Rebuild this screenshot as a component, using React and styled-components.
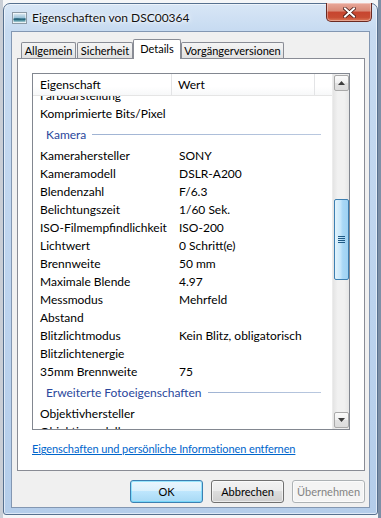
import React from 'react';
import styled, { createGlobalStyle } from 'styled-components';

const GlobalStyle = createGlobalStyle`
  html, body { margin: 0; padding: 0; }
  body {
    width: 381px; height: 518px; overflow: hidden;
    background: #eceef1;
    font-family: "Segoe UI", Lato, "Noto Sans", sans-serif;
    font-size: 12px; color: #000;
  }
  * { box-sizing: border-box; }
`;

const Desktop = styled.div`
  width: 381px; height: 518px; padding: 3px;
  display: flex;
  background: linear-gradient(to right, #c9ced6 0, #c9ced6 3px, #f5f6f8 3px, #f5f6f8 378px, #7d8fa6 378px);
`;

const Window = styled.div`
  flex: 1; display: flex; flex-direction: column;
  border: 1px solid #56708f;
  border-radius: 7px 7px 3px 3px;
  background: linear-gradient(to bottom, #d8e6f6 0, #c7dbf1 26px, #bcd3ee 60%, #b4cdea 100%);
  box-shadow: inset 0 0 0 1px rgba(255,255,255,0.55);
`;

const TitleBar = styled.div`
  height: 27px; display: flex; align-items: center;
  padding: 0 5px 0 8px;
`;

const TitleText = styled.div`
  margin-left: 5px;
  font-size: 12px;
  color: #111;
  text-shadow: 0 0 6px #fff, 0 0 3px #fff;
`;

const CloseButton = styled.div`
  align-self: flex-start; margin-left: auto; margin-top: -1px;
  width: 46px; height: 19px;
  border: 1px solid #6b2a22; border-top: none;
  border-radius: 0 0 5px 5px;
  background: linear-gradient(to bottom, #e9a99b 0, #d98a77 45%, #c7452f 50%, #c84d33 80%, #dd7a5a 100%);
  box-shadow: inset 0 0 0 1px rgba(255,255,255,0.35);
  display: flex; align-items: center; justify-content: center;
`;

const Client = styled.div`
  flex: 1; margin: 0 7px 6px 7px;
  border: 1px solid #8397b2;
  background: #f0f0f0;
  display: flex; flex-direction: column;
  padding: 7px 4px 0 5px;
`;

const TabStrip = styled.div`
  height: 19px; display: flex; align-items: flex-end;
  padding-left: 4px; position: relative; z-index: 1;
`;

const Tab = styled.div`
  width: ${p => p.$w}px;
  height: ${p => (p.$active ? 20 : 16)}px;
  margin-bottom: ${p => (p.$active ? -1 : 0)}px;
  margin-right: ${p => p.$gap || 0}px;
  border: 1px solid #898c95;
  border-bottom: none;
  border-radius: 2px 2px 0 0;
  background: ${p => (p.$active ? '#fff' : 'linear-gradient(to bottom, #f4f4f4 0, #ececec 50%, #e0e0e0 100%)')};
  display: flex; align-items: center; justify-content: center;
  padding-bottom: ${p => (p.$active ? 2 : 0)}px;
  font-size: 11px;
  white-space: nowrap;
`;

const Panel = styled.div`
  height: 413px;
  border: 1px solid #898c95;
  background: #fff;
  display: flex; flex-direction: column;
  padding: 14px 14px 0 14px;
`;

const ListView = styled.div`
  height: 357px;
  border: 1px solid #828790;
  display: flex;
`;

const ListContent = styled.div`
  flex: 1; display: flex; flex-direction: column; overflow: hidden;
`;

const Header = styled.div`
  height: 22px; display: flex; flex: none;
  background: linear-gradient(to bottom, #fff 0, #fff 60%, #f7f8f9 100%);
  border-bottom: 1px solid #e5e5e5;
`;

const HeaderCell = styled.div`
  width: ${p => (p.$w ? `${p.$w}px` : 'auto')};
  flex: ${p => (p.$w ? 'none' : '1')};
  padding-left: ${p => p.$pad || 0}px;
  border-right: ${p => (p.$last ? 'none' : '1px solid #e3e4e6')};
  display: flex; align-items: center;
`;

const Body = styled.div`
  flex: 1; overflow: hidden;
`;

const Rows = styled.div`
  margin-top: ${p => p.$offset}px;
`;

const Row = styled.div`
  height: 18px; display: flex; align-items: center;
  white-space: nowrap;
`;

const NameCell = styled.div`
  width: 146px; padding-left: 7px; flex: none;
`;

const ValueCell = styled.div`
  flex: 1;
`;

const Group = styled.div`
  height: 24px; display: flex; align-items: center;
  padding: 0 11px 0 13px; gap: 6px;
  color: #2a479c;
  white-space: nowrap;
`;

const GroupLine = styled.div`
  flex: 1; height: 1px;
  background: linear-gradient(to right, #9fb3d3, #b9c8df);
`;

const ScrollBar = styled.div`
  width: 17px; flex: none;
  display: flex; flex-direction: column; align-items: center;
  background: linear-gradient(to right, #e4e4e4 0, #f1f1f1 30%, #f1f1f1 70%, #e6e6e6 100%);
  border-left: 1px solid #ececec;
  padding: 1px 0;
`;

const ScrollButton = styled.div`
  width: 15px; height: 16px;
  border: 1px solid #a9a9a9;
  border-radius: 2px;
  background: linear-gradient(to bottom, #fbfbfb 0, #f0f0f0 50%, #e2e2e2 50%, #dcdcdc 100%);
  display: flex; align-items: center; justify-content: center;
  flex: none;
`;

const Thumb = styled.div`
  margin-top: 108px;
  width: 15px; height: 81px; flex: none;
  border: 1px solid #3c7fb1;
  border-radius: 2px;
  background: linear-gradient(to right, #e3f3fc 0, #c8e8fb 40%, #a9d8f6 60%, #9fd2f2 100%);
  display: flex; align-items: center; justify-content: center;
`;

const Spacer = styled.div`
  flex: 1;
`;

const Link = styled.a`
  margin-top: 11px;
  color: #0066cc;
  text-decoration: underline;
  font-size: 11px;
  letter-spacing: -0.1px;
  line-height: 15px;
  align-self: flex-start;
  cursor: pointer;
`;

const ButtonRow = styled.div`
  margin-top: 9px;
  display: flex; justify-content: flex-end; gap: 8px;
`;

const Button = styled.div`
  width: 73px; height: 23px;
  border-radius: 3px;
  display: flex; align-items: center; justify-content: center;
  font-size: 11px;
  border: 1px solid ${p => (p.$default ? '#3c7fb1' : p.$disabled ? '#adb2b5' : '#707070')};
  color: ${p => (p.$disabled ? '#838383' : '#000')};
  background: ${p =>
    p.$default
      ? 'linear-gradient(to bottom, #eaf6fd 0, #d9f0fc 50%, #bee6fd 50%, #a7d9f5 100%)'
      : p.$disabled
      ? '#f4f4f4'
      : 'linear-gradient(to bottom, #f2f2f2 0, #ebebeb 50%, #dddddd 50%, #cfcfcf 100%)'};
  box-shadow: ${p => (p.$default ? 'inset 0 0 0 1px #48d3fb80' : 'inset 0 0 0 1px rgba(255,255,255,0.6)')};
`;

const FileIcon = () => (
  <svg width="15" height="12" viewBox="0 0 15 12">
    <defs>
      <linearGradient id="sky" x1="0" y1="0" x2="0" y2="1">
        <stop offset="0" stopColor="#dbe9f2" />
        <stop offset="0.45" stopColor="#9cc3d9" />
        <stop offset="0.6" stopColor="#2f7088" />
        <stop offset="0.8" stopColor="#5c9aa8" />
        <stop offset="1" stopColor="#cfe3ea" />
      </linearGradient>
    </defs>
    <rect x="0.5" y="0.5" width="14" height="11" fill="#fff" stroke="#8c9aa6" />
    <rect x="1.5" y="1.5" width="12" height="9" fill="url(#sky)" />
    <path d="M1.5 7 Q5 5.5 8 6.8 T13.5 6.2 L13.5 8 L1.5 8 Z" fill="#1f5c72" opacity="0.7" />
  </svg>
);

const CloseGlyph = () => (
  <svg width="13" height="11" viewBox="0 0 13 11">
    <path d="M2 1.5 L11 9.5 M11 1.5 L2 9.5" stroke="#4a1a14" strokeWidth="3.6" strokeLinecap="square" />
    <path d="M2 1.5 L11 9.5 M11 1.5 L2 9.5" stroke="#fff" strokeWidth="2" strokeLinecap="square" />
  </svg>
);

const ArrowUp = () => (
  <svg width="7" height="4" viewBox="0 0 7 4">
    <path d="M0 4 L3.5 0 L7 4 Z" fill="#3d3d3d" />
  </svg>
);

const ArrowDown = () => (
  <svg width="7" height="4" viewBox="0 0 7 4">
    <path d="M0 0 L3.5 4 L7 0 Z" fill="#3d3d3d" />
  </svg>
);

const Grip = () => (
  <svg width="7" height="7" viewBox="0 0 7 7">
    {[0.5, 2.5, 4.5, 6.5].map(y => (
      <line key={y} x1="0" x2="7" y1={y} y2={y} stroke="#1f5a85" strokeWidth="1" />
    ))}
  </svg>
);

const items = [
  { n: 'Farbdarstellung', v: '' },
  { n: 'Komprimierte Bits/Pixel', v: '' },
  { g: 'Kamera' },
  { n: 'Kamerahersteller', v: 'SONY' },
  { n: 'Kameramodell', v: 'DSLR-A200' },
  { n: 'Blendenzahl', v: 'F/6.3' },
  { n: 'Belichtungszeit', v: '1/60 Sek.' },
  { n: 'ISO-Filmempfindlichkeit', v: 'ISO-200' },
  { n: 'Lichtwert', v: '0 Schritt(e)' },
  { n: 'Brennweite', v: '50 mm' },
  { n: 'Maximale Blende', v: '4.97' },
  { n: 'Messmodus', v: 'Mehrfeld' },
  { n: 'Abstand', v: '' },
  { n: 'Blitzlichtmodus', v: 'Kein Blitz, obligatorisch' },
  { n: 'Blitzlichtenergie', v: '' },
  { n: '35mm Brennweite', v: '75' },
  { g: 'Erweiterte Fotoeigenschaften' },
  { n: 'Objektivhersteller', v: '' },
  { n: 'Objektivmodell', v: '' },
];

const tabs = [
  { t: 'Allgemein', w: 55, gap: 1 },
  { t: 'Sicherheit', w: 56 },
  { t: 'Details', w: 48, active: true },
  { t: 'Vorgängerversionen', w: 103 },
];

export default function App() {
  return (
    <>
      <GlobalStyle />
      <Desktop>
        <Window>
          <TitleBar>
            <FileIcon />
            <TitleText>Eigenschaften von DSC00364</TitleText>
            <CloseButton><CloseGlyph /></CloseButton>
          </TitleBar>
          <Client>
            <TabStrip>
              {tabs.map(t => (
                <Tab key={t.t} $w={t.w} $gap={t.gap} $active={t.active}>{t.t}</Tab>
              ))}
            </TabStrip>
            <Panel>
              <ListView>
                <ListContent>
                  <Header>
                    <HeaderCell $w={139} $pad={7}>Eigenschaft</HeaderCell>
                    <HeaderCell $w={143} $pad={6}>Wert</HeaderCell>
                    <HeaderCell $last />
                  </Header>
                  <Body>
                    <Rows $offset={-10}>
                      {items.map((it, i) =>
                        it.g ? (
                          <Group key={i}>{it.g}<GroupLine /></Group>
                        ) : (
                          <Row key={i}>
                            <NameCell>{it.n}</NameCell>
                            <ValueCell>{it.v}</ValueCell>
                          </Row>
                        )
                      )}
                    </Rows>
                  </Body>
                </ListContent>
                <ScrollBar>
                  <ScrollButton><ArrowUp /></ScrollButton>
                  <Thumb><Grip /></Thumb>
                  <Spacer />
                  <ScrollButton><ArrowDown /></ScrollButton>
                </ScrollBar>
              </ListView>
              <Link>Eigenschaften und persönliche Informationen entfernen</Link>
            </Panel>
            <ButtonRow>
              <Button $default>OK</Button>
              <Button>Abbrechen</Button>
              <Button $disabled>Übernehmen</Button>
            </ButtonRow>
          </Client>
        </Window>
      </Desktop>
    </>
  );
}
